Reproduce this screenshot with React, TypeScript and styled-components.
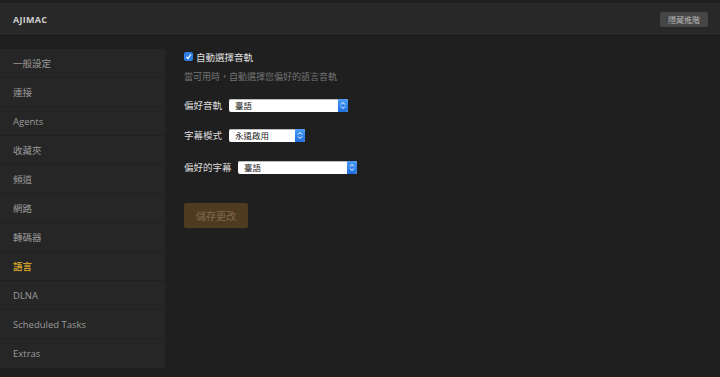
import { FC } from "react";
import styled, { createGlobalStyle } from "styled-components";

const GlobalStyle = createGlobalStyle`
  html, body {
    margin: 0;
    padding: 0;
    background: #1f1f1f;
    font-family: "Open Sans", "Noto Sans CJK TC", sans-serif;
  }
  * { box-sizing: border-box; }
`;

const Page = styled("div")({
  width: "720px",
  height: "377px",
  background: "#1f1f1f",
  overflow: "hidden",
  display: "flex",
  flexDirection: "column",
});

const Header = styled("div")({
  height: "33px",
  marginTop: "3px",
  background: "#282828",
  borderBottom: "1px solid #151515",
  display: "flex",
  alignItems: "center",
  justifyContent: "space-between",
  padding: "0 12px 0 13px",
});

const Title = styled("div")({
  fontFamily: '"Open Sans", sans-serif',
  fontWeight: 700,
  fontSize: "9px",
  color: "#cfcfcf",
  letterSpacing: "0.3px",
});

const HeaderButton = styled("div")({
  width: "48px",
  height: "15px",
  borderRadius: "2px",
  background: "#454545",
  color: "#b5b5b5",
  fontSize: "8px",
  display: "flex",
  alignItems: "center",
  justifyContent: "center",
});

const Body = styled("div")({
  display: "flex",
  paddingTop: "13px",
});

const Sidebar = styled("div")({
  width: "165px",
  background: "#262626",
  display: "flex",
  flexDirection: "column",
});

const NavItem = styled("div")<{ $active?: boolean; $last?: boolean }>(
  ({ $active = false, $last = false }) => ({
    height: "29px",
    display: "flex",
    alignItems: "center",
    paddingLeft: "13px",
    fontSize: "9.5px",
    color: "#9a9a9a",
    borderBottom: $last ? "none" : "1px solid #202020",
    ...($active && { color: "#c89c2c", fontWeight: 600 }),
  })
);

const Content = styled("div")({
  flex: 1,
  padding: "1px 0 0 19px",
  display: "flex",
  flexDirection: "column",
});

const CheckRow = styled("div")({
  display: "flex",
  alignItems: "center",
  gap: "3px",
  height: "13px",
  fontSize: "9.5px",
  color: "#e0e0e0",
});

const CheckBox = styled("div")({
  width: "9px",
  height: "9px",
  borderRadius: "2px",
  background: "#2f7fe6",
  display: "flex",
  alignItems: "center",
  justifyContent: "center",
});

const Hint = styled("div")({
  marginTop: "7px",
  fontSize: "9px",
  color: "#747474",
});

const FieldRow = styled("div")<{ $gap: number }>(({ $gap }) => ({
  display: "flex",
  alignItems: "center",
  marginTop: `${$gap}px`,
  height: "14px",
}));

const FieldLabel = styled("div")<{ $width: number }>(({ $width }) => ({
  width: `${$width}px`,
  fontSize: "9.5px",
  color: "#dcdcdc",
}));

const SelectBox = styled("div")<{ $width: number }>(({ $width }) => ({
  width: `${$width}px`,
  height: "13px",
  display: "flex",
  background: "#fff",
  borderRadius: "2px",
  boxShadow: "inset 0 1px 0 #bdbdbd",
  overflow: "hidden",
}));

const SelectText = styled("div")({
  flex: 1,
  fontSize: "8.5px",
  color: "#222",
  padding: "0 6px",
  lineHeight: "13px",
});

const Stepper = styled("div")({
  width: "10px",
  background: "linear-gradient(#4a9cf7, #1f6fe0)",
  borderRadius: "0 2px 2px 0",
  display: "flex",
  alignItems: "center",
  justifyContent: "center",
});

const SaveButton = styled("div")({
  marginTop: "29px",
  width: "64px",
  height: "25px",
  borderRadius: "2px",
  background: "#4f3b20",
  color: "#806a4c",
  fontSize: "10px",
  display: "flex",
  alignItems: "center",
  justifyContent: "center",
});

const Select: FC<{ width: number; value: string }> = ({ width, value }) => (
  <SelectBox $width={width}>
    <SelectText>{value}</SelectText>
    <Stepper>
      <svg width="6" height="9" viewBox="0 0 6 9">
        <path d="M1 3.5 L3 1.5 L5 3.5 M1 5.5 L3 7.5 L5 5.5" stroke="#fff" strokeWidth="1" fill="none" />
      </svg>
    </Stepper>
  </SelectBox>
);

const navItems = [
  "一般設定",
  "連接",
  "Agents",
  "收藏夾",
  "頻道",
  "網路",
  "轉碼器",
  "語言",
  "DLNA",
  "Scheduled Tasks",
  "Extras",
];

const App = () => {
  return (
    <Page>
      <GlobalStyle />
      <Header>
        <Title>AJIMAC</Title>
        <HeaderButton>隱藏進階</HeaderButton>
      </Header>
      <Body>
        <Sidebar>
          {navItems.map((item, i) => (
            <NavItem key={item} $active={item === "語言"} $last={i === navItems.length - 1}>
              {item}
            </NavItem>
          ))}
        </Sidebar>
        <Content>
          <CheckRow>
            <CheckBox>
              <svg width="7" height="7" viewBox="0 0 7 7">
                <path d="M1.5 4 L3 5.5 L5.8 1.5" stroke="#fff" strokeWidth="1.3" fill="none" />
              </svg>
            </CheckBox>
            自動選擇音軌
          </CheckRow>
          <Hint>當可用時，自動選擇您偏好的語言音軌</Hint>
          <FieldRow $gap={15}>
            <FieldLabel $width={45}>偏好音軌</FieldLabel>
            <Select width={119} value="臺語" />
          </FieldRow>
          <FieldRow $gap={16}>
            <FieldLabel $width={45}>字幕模式</FieldLabel>
            <Select width={76} value="永遠啟用" />
          </FieldRow>
          <FieldRow $gap={18}>
            <FieldLabel $width={54}>偏好的字幕</FieldLabel>
            <Select width={119} value="臺語" />
          </FieldRow>
          <SaveButton>儲存更改</SaveButton>
        </Content>
      </Body>
    </Page>
  );
};

export default App;
